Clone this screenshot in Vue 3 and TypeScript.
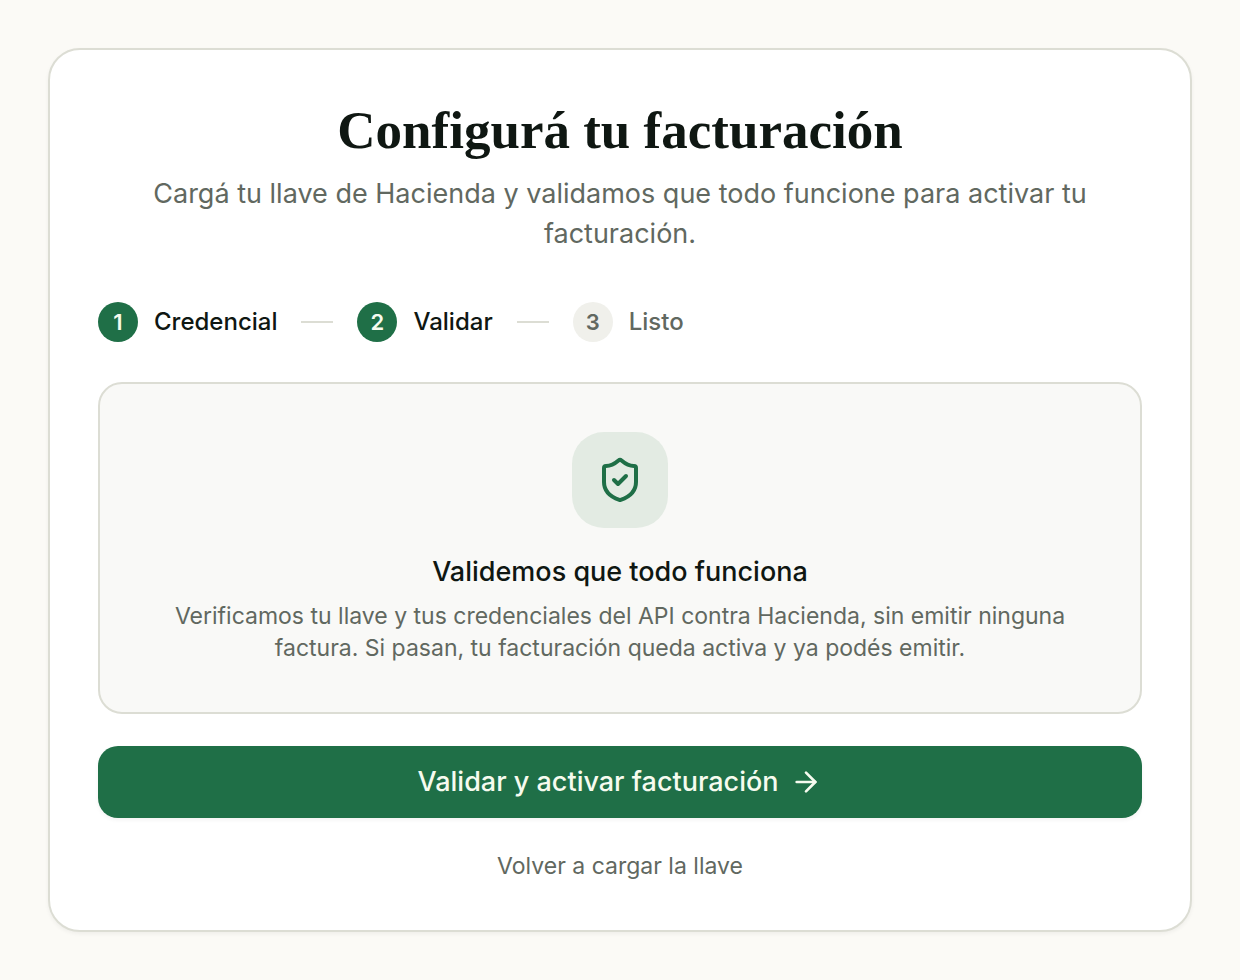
<script setup lang="ts">
interface Step {
  id: number
  label: string
}

const current = 2
const steps: Step[] = [
  { id: 1, label: 'Credencial' },
  { id: 2, label: 'Validar' },
  { id: 3, label: 'Listo' },
]
</script>

<template>
  <main class="page">
    <section class="card">
      <header class="intro">
        <h1>Configurá tu facturación</h1>
        <p>Cargá tu llave de Hacienda y validamos que todo funcione para activar tu facturación.</p>
      </header>

      <ol class="steps">
        <li
          v-for="step in steps"
          :key="step.id"
          class="step"
          :class="{ reached: step.id <= current }"
          :aria-current="step.id === current ? 'step' : undefined"
        >
          <span class="number">{{ step.id }}</span>
          <span class="label">{{ step.label }}</span>
        </li>
      </ol>

      <div class="panel">
        <div class="badge">
          <svg viewBox="0 0 24 24" aria-hidden="true">
            <path d="M20 13c0 5-3.500 7.500-7.660 8.950a1 1 0 0 1-.67-.01C7.500 20.500 4 18 4 13V6a1 1 0 0 1 1-1c2 0 4.500-1.200 6.240-2.720a1.170 1.170 0 0 1 1.520 0C14.510 3.810 17 5 19 5a1 1 0 0 1 1 1z" />
            <path d="m9 12 2 2 4-4" />
          </svg>
        </div>
        <h2>Validemos que todo funciona</h2>
        <p>Verificamos tu llave y tus credenciales del API contra Hacienda, sin emitir ninguna factura. Si pasan, tu facturación queda activa y ya podés emitir.</p>
      </div>

      <button type="button" class="primary">
        <span>Validar y activar facturación</span>
        <svg viewBox="0 0 24 24" aria-hidden="true">
          <path d="M5 12h14" />
          <path d="m12 5 7 7-7 7" />
        </svg>
      </button>
      <button type="button" class="back">Volver a cargar la llave</button>
    </section>
  </main>
</template>

<style>
body {
  margin: 0;
  background: #fbfaf6;
}
</style>

<style scoped>
.page {
  padding: 48px;
  font-family: Inter, "Liberation Sans", Arial, sans-serif;
  color: #0f1712;
}

.card {
  display: flex;
  flex-direction: column;
  padding: 48px;
  border: 2px solid #dcddd4;
  border-radius: 32px;
  background: #fff;
  box-shadow: 0 2px 4px rgb(15 23 18 / 5%);
}

.intro {
  text-align: center;
}

h1,
h2,
p {
  margin: 0;
}

h1 {
  font: 700 53px/64px "Liberation Serif", "Times New Roman", serif;
}

.intro p {
  margin-top: 12px;
  padding: 0 48px;
  font-size: 27px;
  line-height: 40px;
  color: #616860;
}

.steps {
  display: flex;
  flex-wrap: wrap;
  gap: 24px;
  margin: 48px 0 40px;
  padding: 0;
  list-style: none;
}

.step {
  display: flex;
  align-items: center;
  gap: 16px;
  font-size: 24px;
  font-weight: 500;
  line-height: 32px;
  color: #616860;
}

.step.reached {
  color: #0f1712;
}

.step:not(:last-child)::after {
  width: 32px;
  height: 2px;
  margin-left: 8px;
  background: #dcddd4;
  content: "";
}

.number {
  display: grid;
  width: 40px;
  height: 40px;
  place-items: center;
  border-radius: 50%;
  background: #f0f0eb;
  font-size: 22px;
  font-weight: 600;
}

.reached .number {
  background: #1f6f47;
  color: #f6fbef;
}

.panel {
  display: flex;
  flex-direction: column;
  align-items: center;
  padding: 48px;
  border: 2px solid #dcddd4;
  border-radius: 24px;
  background: #f9f9f7;
  text-align: center;
}

.badge {
  display: grid;
  width: 96px;
  height: 96px;
  place-items: center;
  border-radius: 32px;
  background: #e3ebe3;
  color: #1f6f47;
}

svg {
  fill: none;
  stroke: currentColor;
  stroke-width: 2;
  stroke-linecap: round;
  stroke-linejoin: round;
}

.badge svg {
  width: 48px;
  height: 48px;
}

h2 {
  margin-top: 24px;
  font-size: 27px;
  font-weight: 500;
  line-height: 40px;
}

.panel p {
  max-width: 912px;
  margin-top: 8px;
  font-size: 23px;
  line-height: 32px;
  color: #616860;
}

button {
  border: 0;
  font-family: inherit;
  cursor: pointer;
}

.primary {
  display: flex;
  align-items: center;
  justify-content: center;
  gap: 12px;
  margin-top: 32px;
  padding: 16px 32px;
  border-radius: 20px;
  background: #1f6f47;
  box-shadow: 0 2px 4px rgb(15 23 18 / 5%);
  font-size: 27px;
  font-weight: 500;
  line-height: 40px;
  color: #f6fbef;
}

.primary svg {
  width: 32px;
  height: 32px;
}

.back {
  align-self: center;
  margin-top: 32px;
  padding: 0;
  background: none;
  font-size: 23px;
  line-height: 32px;
  color: #616860;
}
</style>
